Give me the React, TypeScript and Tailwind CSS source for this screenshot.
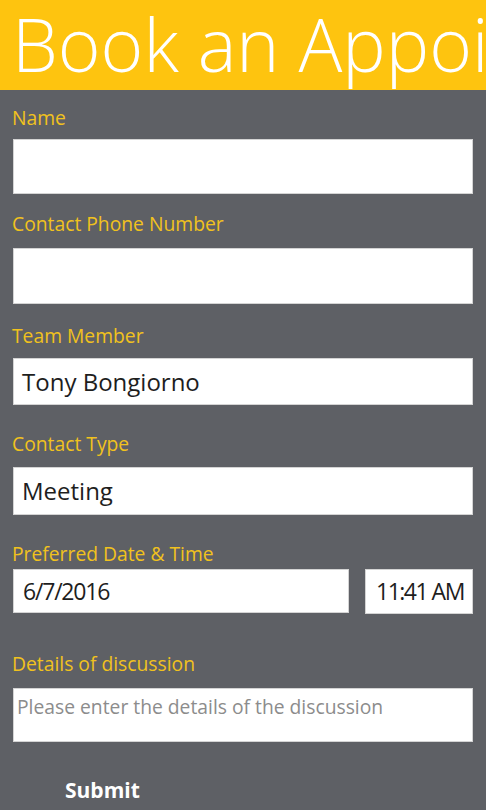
const Field = ({
  label,
  className,
  children,
  inputGap,
}: {
  label: string;
  className: string;
  children: React.ReactNode;
  inputGap: string;
}) => (
  <div className={className}>
    <div className="text-[19.3px] leading-6 text-[#f1c21d]">{label}</div>
    <div className={inputGap}>{children}</div>
  </div>
);

const BookAppointment = () => {
  return (
    <div className="w-[486px] h-[810px] overflow-hidden bg-[#5e6065] font-['Open_Sans',sans-serif]">
      {/* title runs off the right edge, like the app does */}
      <div className="h-[90px] bg-[#fec40f] overflow-hidden whitespace-nowrap">
        <h1 className="pl-[12px] pt-[4px] text-[73px] leading-[80px] font-light text-white">
          Book an Appointment
        </h1>
      </div>

      <div className="px-[13px]">
        <Field label="Name" className="pt-[16px] -ml-px" inputGap="mt-[9px] ml-px">
          <div className="h-[55px] bg-white border border-[#d4d4d4]"></div>
        </Field>

        <Field label="Contact Phone Number" className="mt-[18px] -ml-px" inputGap="mt-[12px] ml-px">
          <div className="h-[56px] bg-white border border-[#d4d4d4]"></div>
        </Field>

        <Field label="Team Member" className="mt-[20px] -ml-px" inputGap="mt-[10px] ml-px">
          <div className="h-[47px] bg-white border border-[#d4d4d4] pl-[8px] flex items-center text-[24px] text-[#1e1e1e]">
            Tony Bongiorno
          </div>
        </Field>

        <Field label="Contact Type" className="mt-[27px] -ml-px" inputGap="mt-[11px] ml-px">
          <div className="h-[48px] bg-white border border-[#d4d4d4] pl-[8px] flex items-center text-[24px] text-[#1e1e1e]">
            Meeting
          </div>
        </Field>

        <Field label="Preferred Date & Time" className="mt-[27px] -ml-px" inputGap="mt-[3px] ml-px">
          <div className="flex gap-[16px]">
            <div className="w-[336px] h-[44px] bg-white border border-[#d4d4d4] pl-[9px] flex items-center text-[23px] tracking-[-1.2px] text-[#1e1e1e]">
              6/7/2016
            </div>
            <div className="flex-1 h-[45px] bg-white border border-[#d4d4d4] pl-[10px] flex items-center text-[23px] tracking-[-1.5px] text-[#1e1e1e] whitespace-nowrap">
              11:41 AM
            </div>
          </div>
        </Field>

        <Field label="Details of discussion" className="mt-[38px] -ml-px" inputGap="mt-[12px] ml-px">
          <div className="h-[54px] bg-white border border-[#d4d4d4] pl-[3px] pt-[5px] text-[19.3px] leading-[26px] text-[#8c8c8c]">
            Please enter the details of the discussion
          </div>
        </Field>

        <div className="mt-[34px] pl-[52px] text-[21px] leading-7 font-bold text-white">
          Submit
        </div>
      </div>
    </div>
  );
};

export default BookAppointment;
